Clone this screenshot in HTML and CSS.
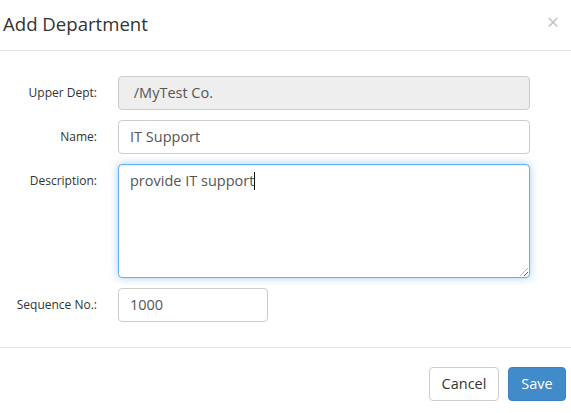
FILE: index.html
```html
<!DOCTYPE html>
<html>
<head>
<meta charset="utf-8">
<link rel="stylesheet" href="styles.css">
</head>
<body>
<div class="modal">
  <div class="modal-header">
    <h4 class="modal-title">Add Department</h4>
    <span class="close">&times;</span>
  </div>
  <div class="modal-body">
    <div class="form-row">
      <label class="form-label">Upper Dept:</label>
      <div class="form-control readonly">&nbsp;/MyTest Co.</div>
    </div>
    <div class="form-row">
      <label class="form-label">Name:</label>
      <div class="form-control">IT Support</div>
    </div>
    <div class="form-row">
      <label class="form-label">Description:</label>
      <div class="form-control textarea focused">provide IT support<span class="caret"></span><span class="grip"></span></div>
    </div>
    <div class="form-row">
      <label class="form-label">Sequence No.:</label>
      <div class="form-control short">1000</div>
    </div>
  </div>
  <div class="modal-footer">
    <button class="btn btn-default">Cancel</button>
    <button class="btn btn-primary">Save</button>
  </div>
</div>
</body>
</html>
```
FILE: styles.css
```css
html, body {
  margin: 0;
  padding: 0;
  background: #fff;
}
body {
  font-family: "Open Sans", "Noto Sans", sans-serif;
  color: #333;
}
.modal {
  width: 571px;
}
.modal-header {
  height: 50px;
  border-bottom: 1px solid #e5e5e5;
  display: flex;
  align-items: center;
  justify-content: space-between;
  padding: 0 12px 0 3px;
  box-sizing: content-box;
}
.modal-title {
  margin: 0;
  font-size: 18.6px;
  font-weight: 400;
  color: #333;
  line-height: 1;
  padding-bottom: 2px;
}
.close {
  font-size: 21px;
  line-height: 1;
  color: #c4c4c4;
  font-weight: 400;
  padding-bottom: 6px;
}
.modal-body {
  padding: 25px 0 25px 0;
  display: flex;
  flex-direction: column;
  gap: 10px;
}
.form-row {
  display: grid;
  grid-template-columns: 97px 412px;
  column-gap: 21px;
  align-items: start;
}
.form-label {
  text-align: right;
  font-size: 12px;
  line-height: 16px;
  padding-top: 9px;
  color: #333;
}
.form-control {
  box-sizing: border-box;
  height: 34px;
  border: 1px solid #ccc;
  border-radius: 4px;
  padding: 6px 11px;
  font-size: 14.5px;
  line-height: 20px;
  color: #555;
  background: #fff;
}
.form-control.readonly {
  background: #eee;
}
.form-control.textarea {
  height: 114px;
  position: relative;
}
.form-control.focused {
  border-color: #66afe9;
  box-shadow: inset 0 1px 1px rgba(0,0,0,.075), 0 0 8px rgba(102,175,233,.6);
}
.form-control.short {
  width: 150px;
}
.caret {
  display: inline-block;
  width: 1px;
  height: 18px;
  background: #111;
  vertical-align: -4px;
}
.grip {
  position: absolute;
  right: 1px;
  bottom: 1px;
  width: 8px;
  height: 8px;
  background: repeating-linear-gradient(135deg, transparent 0 2px, #666 2px 3px);
  clip-path: polygon(100% 0, 100% 100%, 0 100%);
}
.modal-footer {
  border-top: 1px solid #e5e5e5;
  padding: 19px 5px 12px 0;
  display: flex;
  justify-content: flex-end;
  gap: 9px;
}
.btn {
  box-sizing: border-box;
  height: 34px;
  font-family: inherit;
  font-size: 14.5px;
  line-height: 20px;
  padding: 6px 0;
  border-radius: 4px;
  border: 1px solid transparent;
  cursor: pointer;
}
.btn-default {
  width: 70px;
  background: #fff;
  border-color: #ccc;
  color: #333;
}
.btn-primary {
  width: 58px;
  background: #428bca;
  border-color: #3c83c2;
  color: #fff;
}
```
